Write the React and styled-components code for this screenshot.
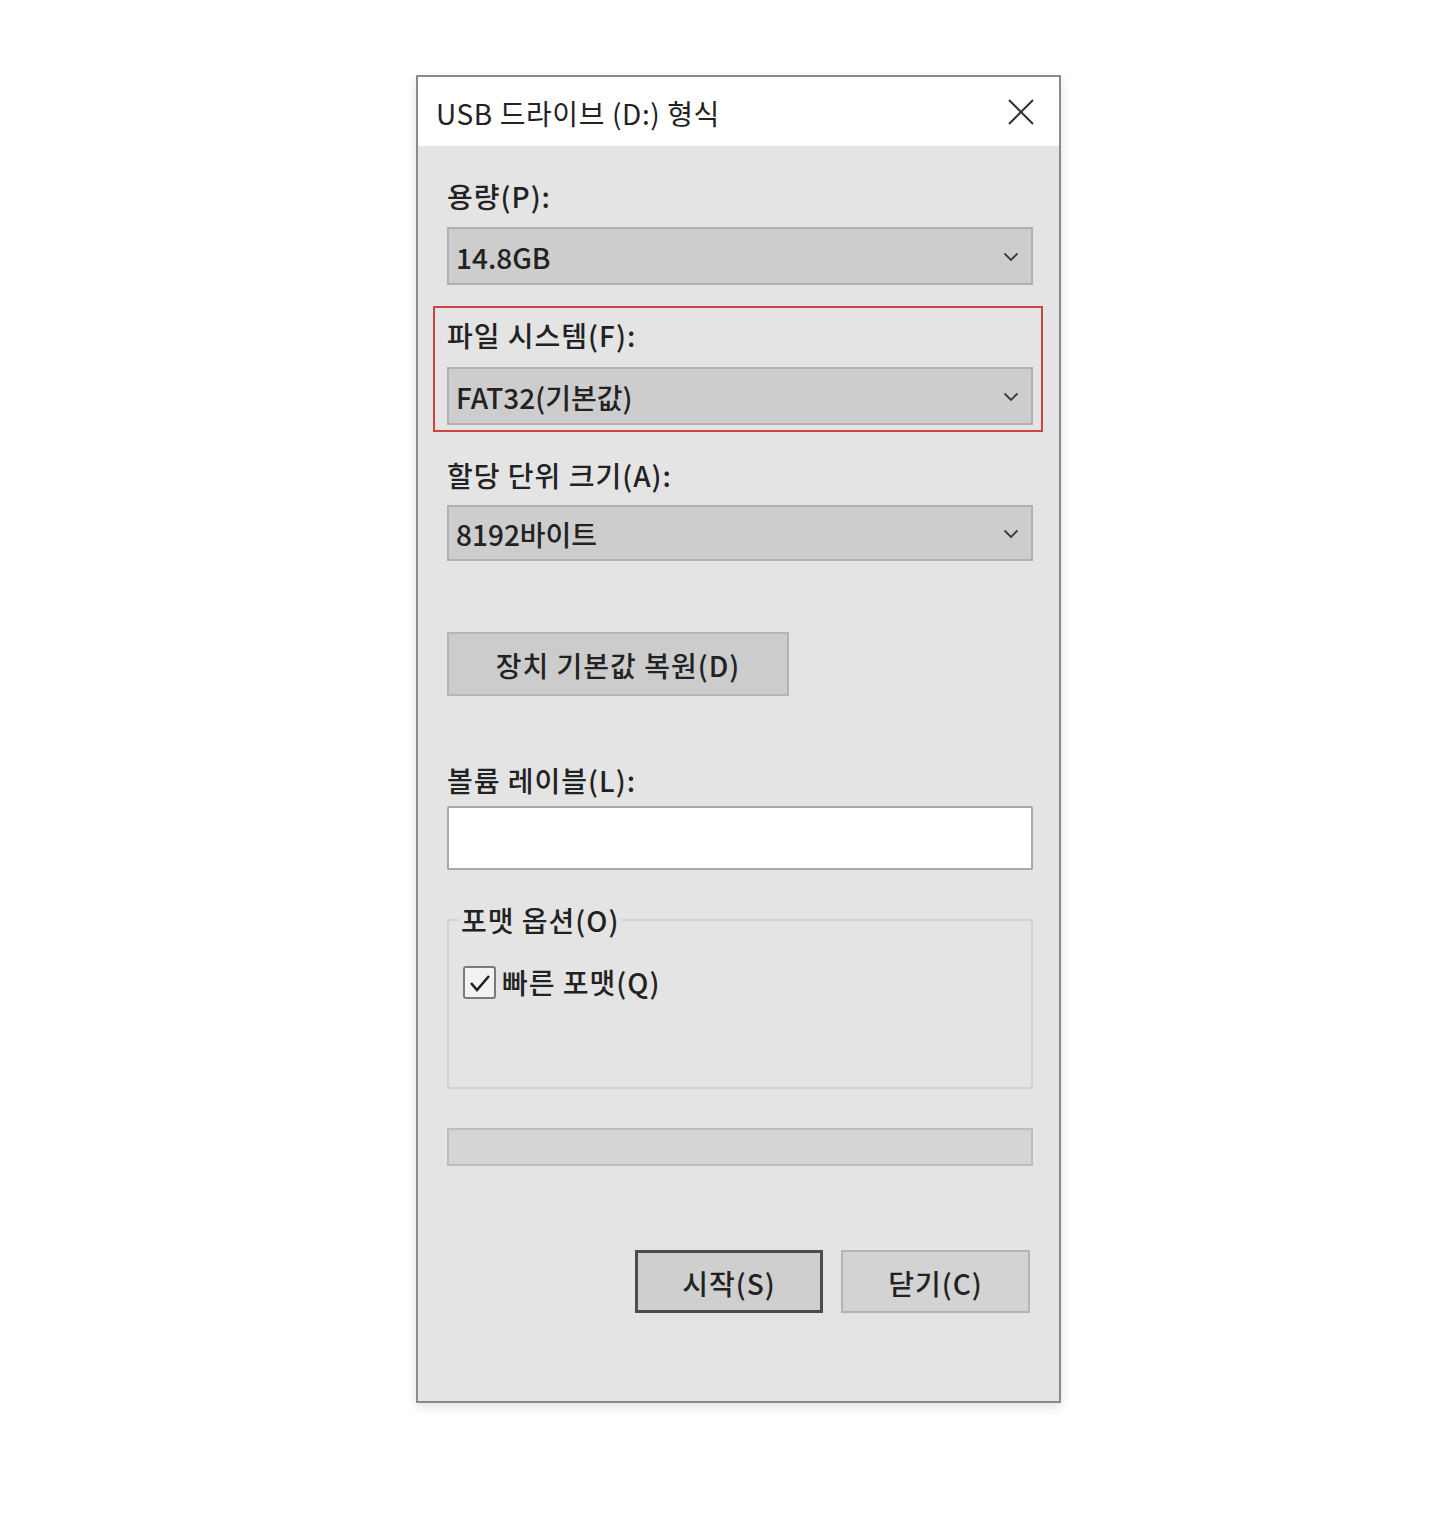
import React from "react";
import styled, { createGlobalStyle } from "styled-components";

const Global = createGlobalStyle`
  html, body { margin: 0; padding: 0; background: #ffffff; }
  body { font-family: "Noto Sans CJK KR", "Noto Sans", sans-serif; }
`;

const Page = styled.div`
  display: flex;
  padding: 75px 0 60px 416px;
`;

const Dialog = styled.div`
  width: 641px;
  border: 2px solid #8a8a8a;
  background: #e4e4e4;
  box-shadow: 0 4px 10px rgba(0, 0, 0, 0.12);
  display: flex;
  flex-direction: column;
`;

const TitleBar = styled.div`
  height: 69px;
  background: #ffffff;
  display: flex;
  align-items: center;
  justify-content: space-between;
  padding: 0 24px 0 18px;
`;

const Title = styled.div`
  font-size: 28px;
  color: #222;
  letter-spacing: 0.6px;
  padding-top: 2px;
`;

const Body = styled.div`
  display: flex;
  flex-direction: column;
  padding: 34px 26px 88px 29px;
`;

const Label = styled.div`
  font-size: 28px;
  font-weight: 500;
  color: #222;
  letter-spacing: 1px;
  line-height: 32px;
  margin-bottom: ${(p) => p.$mb ?? 15}px;
`;

const Select = styled.div`
  height: ${(p) => p.$h ?? 58}px;
  box-sizing: border-box;
  background: #cdcdcd;
  border: 2px solid #b0b0b0;
  display: flex;
  align-items: center;
  justify-content: space-between;
  padding: 2px 12px 0 7px;
  font-size: 28px;
  font-weight: 500;
  color: #222;
  letter-spacing: 0px;
`;

const Highlight = styled.div`
  margin: 21px -10px 27px -14px;
  padding: 11px 8px 5px 12px;
  border: 2px solid #c9473f;
  display: flex;
  flex-direction: column;
`;

const Spacer = styled.div`
  height: ${(p) => p.$h}px;
`;

const Button = styled.div`
  box-sizing: border-box;
  width: ${(p) => p.$w}px;
  height: ${(p) => p.$h ?? 63}px;
  background: ${(p) => p.$bg ?? "#cccccc"};
  border: ${(p) => (p.$default ? "3px solid #4c4c4c" : "2px solid #b4b4b4")};
  display: flex;
  align-items: center;
  justify-content: center;
  font-size: 28px;
  font-weight: 500;
  color: #222;
  letter-spacing: 1px;
  padding-top: 2px;
`;

const Input = styled.div`
  height: 64px;
  box-sizing: border-box;
  background: #ffffff;
  border: 2px solid #a8a8a8;
  border-radius: 2px;
`;

const Group = styled.fieldset`
  margin: 34px 0 0 0;
  padding: 30px 14px 0 14px;
  height: 185px;
  box-sizing: border-box;
  border: 2px solid #d3d3d3;
  min-width: 0;
`;

const Legend = styled.legend`
  padding: 0 2px;
  margin-left: -4px;
  font-size: 28px;
  font-weight: 500;
  color: #222;
  letter-spacing: 1px;
  line-height: 32px;
`;

const CheckRow = styled.div`
  display: flex;
  align-items: center;
  gap: 6px;
  font-size: 28px;
  font-weight: 500;
  color: #222;
  letter-spacing: 1px;
  line-height: 33px;
`;

const Box = styled.div`
  width: 33px;
  height: 33px;
  box-sizing: border-box;
  border: 2px solid #7a7a7a;
  border-radius: 3px;
  background: #f2f2f2;
  display: flex;
  align-items: center;
  justify-content: center;
`;

const Progress = styled.div`
  margin-top: 39px;
  height: 38px;
  box-sizing: border-box;
  background: #d5d5d5;
  border: 2px solid #bdbdbd;
`;

const Footer = styled.div`
  margin-top: 84px;
  display: flex;
  justify-content: flex-end;
  gap: 18px;
  padding-right: 3px;
`;

const Chevron = () => (
  <svg width="16" height="10" viewBox="0 0 16 10">
    <path d="M1.5 1.5 L8 8 L14.5 1.5" fill="none" stroke="#3a3a3a" strokeWidth="1.8" />
  </svg>
);

const CloseIcon = () => (
  <svg width="28" height="28" viewBox="0 0 28 28">
    <path d="M2 2 L26 26 M26 2 L2 26" stroke="#333" strokeWidth="2" />
  </svg>
);

const Check = () => (
  <svg width="24" height="22" viewBox="0 0 24 22">
    <path d="M3 11 L9 18 L21 4" fill="none" stroke="#222" strokeWidth="2.6" />
  </svg>
);

export default function App() {
  return (
    <>
      <Global />
      <Page>
        <Dialog>
          <TitleBar>
            <Title>USB 드라이브 (D:) 형식</Title>
            <CloseIcon />
          </TitleBar>
          <Body>
            <Label>용량(P):</Label>
            <Select>
              <span>14.8GB</span>
              <Chevron />
            </Select>
            <Highlight>
              <Label $mb={16}>파일 시스템(F):</Label>
              <Select>
                <span>FAT32(기본값)</span>
                <Chevron />
              </Select>
            </Highlight>
            <Label $mb={14}>할당 단위 크기(A):</Label>
            <Select $h={56}>
              <span>8192바이트</span>
              <Chevron />
            </Select>
            <Spacer $h={71} />
            <Button $w={342} $h={64}>장치 기본값 복원(D)</Button>
            <Spacer $h={68} />
            <Label $mb={10}>볼륨 레이블(L):</Label>
            <Input />
            <Group>
              <Legend>포맷 옵션(O)</Legend>
              <CheckRow>
                <Box>
                  <Check />
                </Box>
                빠른 포맷(Q)
              </CheckRow>
            </Group>
            <Progress />
            <Footer>
              <Button $w={188} $default $bg="#cfcfcf">시작(S)</Button>
              <Button $w={189} $bg="#d3d3d3">닫기(C)</Button>
            </Footer>
          </Body>
        </Dialog>
      </Page>
    </>
  );
}
